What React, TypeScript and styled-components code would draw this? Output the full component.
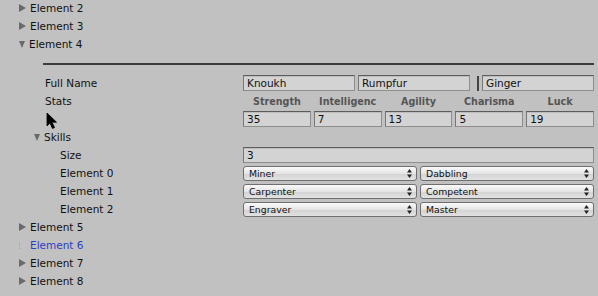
import React from "react";
import styled, { createGlobalStyle } from "styled-components";

const GlobalStyle = createGlobalStyle`
  html, body {
    margin: 0;
    padding: 0;
    background: #c1c1c1;
    overflow: hidden;
  }
  body {
    font-family: "DejaVu Sans", "Noto Sans", sans-serif;
    font-size: 10.5px;
    color: #111;
  }
`;

const FIELD_X = 243;

type FoldProps = { label: string; indent: number; open?: boolean; blue?: boolean; leaf?: boolean };

function Foldout({ label, indent, open, blue, leaf }: FoldProps) {
  return (
    <Row>
      <FoldLabel $indent={indent} $blue={blue}>
        {leaf ? <LeafMark /> : <Arrow $open={open} />}
        <span>{label}</span>
      </FoldLabel>
    </Row>
  );
}

function Popup({ value }: { value: string }) {
  return (
    <PopupBox>
      <span>{value}</span>
      <svg width="5" height="9" viewBox="0 0 5 9">
        <path d="M0 3.5 L2.5 0 L5 3.5 Z M0 5.5 L2.5 9 L5 5.5 Z" fill="#222" />
      </svg>
    </PopupBox>
  );
}

const stats = [
  { name: "Strength", value: "35" },
  { name: "Intelligenc", value: "7" },
  { name: "Agility", value: "13" },
  { name: "Charisma", value: "5" },
  { name: "Luck", value: "19" },
];

const skills = [
  { label: "Element 0", job: "Miner", level: "Dabbling" },
  { label: "Element 1", job: "Carpenter", level: "Competent" },
  { label: "Element 2", job: "Engraver", level: "Master" },
];

export default function App() {
  return (
    <Inspector>
      <GlobalStyle />
      <Foldout label="Element 2" indent={19} />
      <Foldout label="Element 3" indent={19} />
      <Foldout label="Element 4" indent={19} open />

      <SeparatorRow>
        <Line />
      </SeparatorRow>

      <Row>
        <Label $indent={45}>Full Name</Label>
        <Values>
          <Field>Knoukh</Field>
          <Field>Rumpfur</Field>
          <Bar />
          <Field>Ginger</Field>
        </Values>
      </Row>

      <Row>
        <Label $indent={45}>Stats</Label>
        <Values>
          {stats.map((s) => (
            <StatName key={s.name}>{s.name}</StatName>
          ))}
        </Values>
      </Row>
      <Row>
        <Label $indent={45} />
        <Values>
          {stats.map((s) => (
            <Field key={s.name}>{s.value}</Field>
          ))}
        </Values>
      </Row>

      <Foldout label="Skills" indent={34} open />
      <Row>
        <Label $indent={60}>Size</Label>
        <Values>
          <Field>3</Field>
        </Values>
      </Row>
      {skills.map((s) => (
        <Row key={s.label}>
          <Label $indent={60}>{s.label}</Label>
          <Values>
            <Popup value={s.job} />
            <Popup value={s.level} />
          </Values>
        </Row>
      ))}

      <Foldout label="Element 5" indent={19} />
      <Foldout label="Element 6" indent={19} blue leaf />
      <Foldout label="Element 7" indent={19} />
      <Foldout label="Element 8" indent={19} />
      <Foldout label="Element 9" indent={19} />

      <Cursor width="12" height="18" viewBox="0 0 12 18">
        <path d="M1 1 L1 14 L4 11 L6.5 16.5 L8.5 15.5 L6 10.2 L10.5 10.2 Z" fill="#000" stroke="#000" strokeWidth="0.8" strokeLinejoin="round" />
      </Cursor>
    </Inspector>
  );
}

const Inspector = styled.div`
  position: relative;
  width: 598px;
  height: 296px;
  margin-top: -1px;
`;

const Row = styled.div`
  display: flex;
  align-items: center;
  height: 18px;
  padding-right: 4px;
`;

const FoldLabel = styled.div<{ $indent: number; $blue?: boolean }>`
  display: flex;
  align-items: center;
  gap: 4px;
  padding-left: ${(p) => p.$indent}px;
  color: ${(p) => (p.$blue ? "#2b3fc6" : "#111")};
  white-space: nowrap;
`;

const Arrow = styled.span<{ $open?: boolean }>`
  width: 0;
  height: 0;
  margin-right: 0;
  ${(p) =>
    p.$open
      ? `border-left: 3.5px solid transparent;
         border-right: 3.5px solid transparent;
         border-top: 7px solid #6a6a6a;`
      : `border-top: 4px solid transparent;
         border-bottom: 4px solid transparent;
         border-left: 7px solid #6a6a6a;`}
`;

const LeafMark = styled.span`
  width: 7px;
  height: 7px;
  box-sizing: border-box;
  border-left: 1px dotted #9aa0b8;
`;

const Label = styled.div<{ $indent: number }>`
  flex: 0 0 ${FIELD_X}px;
  box-sizing: border-box;
  padding-left: ${(p) => p.$indent}px;
  white-space: nowrap;
`;

const Values = styled.div`
  flex: 1;
  display: flex;
  align-items: center;
  gap: 3px;
  min-width: 0;
`;

const Field = styled.div`
  flex: 1;
  min-width: 0;
  height: 16px;
  box-sizing: border-box;
  padding: 0 3px;
  line-height: 14px;
  background: #d3d3d3;
  border: 1px solid #8e8e8e;
  border-top-color: #5c5c5c;
  border-left-color: #777;
  box-shadow: inset 0 1px 0 #bdbdbd;
  white-space: nowrap;
  overflow: hidden;
`;

const Bar = styled.div`
  width: 2px;
  height: 15px;
  margin-left: 4px;
  background: #444;
`;

const StatName = styled.div`
  flex: 1;
  min-width: 0;
  text-align: center;
  font-weight: bold;
  font-size: 9.6px;
  color: #555;
  white-space: nowrap;
  overflow: hidden;
`;

const PopupBox = styled.div`
  flex: 1;
  min-width: 0;
  height: 15px;
  box-sizing: border-box;
  display: flex;
  align-items: center;
  justify-content: space-between;
  padding: 0 4px 0 5px;
  font-size: 9.3px;
  border: 1px solid #6f6f6f;
  border-radius: 3px;
  background: linear-gradient(#fafafa, #e4e4e4 50%, #d2d2d2 51%, #e2e2e2);
  white-space: nowrap;
`;

const SeparatorRow = styled.div`
  height: 21px;
  display: flex;
  align-items: center;
  padding: 0 4px 0 43px;
`;

const Line = styled.div`
  flex: 1;
  height: 2px;
  margin-top: 1px;
  background: #3c3c3c;
`;

const Cursor = styled.svg`
  position: absolute;
  left: 46px;
  top: 113px;
`;
